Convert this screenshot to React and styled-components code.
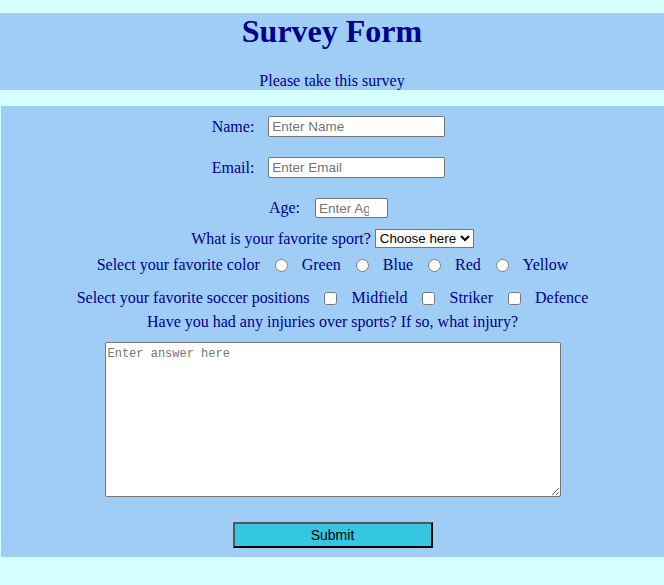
import styled, { createGlobalStyle } from "styled-components";

const GlobalStyle = createGlobalStyle`
  html, body {
    margin: 0;
    padding: 0;
    background: #d5ffff;
    font-family: "Liberation Serif", "Times New Roman", serif;
  }
`;

const Page = styled.div`
  min-height: 585px;
  padding-top: 13px;
  box-sizing: border-box;
`;

const Header = styled.header`
  background: #9fcdf6;
  text-align: center;
  color: #00008b;
`;

const Title = styled.h1`
  margin: 0;
  font-size: 32px;
  line-height: 37px;
  font-weight: bold;
`;

const Subtitle = styled.p`
  margin: 22px 0 0;
  font-size: 16px;
  line-height: 18px;
`;

const Form = styled.form`
  margin: 16px 0 0 1px;
  background: #9fcdf6;
  color: #00008b;
  font-size: 16px;
  line-height: 18px;
  display: flex;
  flex-direction: column;
  align-items: center;
  padding-bottom: 9px;
`;

const Row = styled.div`
  display: flex;
  align-items: center;
  justify-content: center;
  margin-top: ${(p) => p.$mt}px;
  height: ${(p) => p.$h}px;
  padding-right: ${(p) => p.$shift || 0}px;
`;

const Label = styled.label`
  margin-right: ${(p) => p.$gap}px;
  white-space: nowrap;
`;

const TextInput = styled.input`
  box-sizing: border-box;
  width: ${(p) => p.$w}px;
  height: ${(p) => p.$h}px;
  margin: 0;
  padding: 1px 3px;
  border: 1px solid #767676;
  border-radius: 2px;
  background: #fff;
  font-family: "Liberation Sans", Arial, sans-serif;
  font-size: 13.5px;
  &::placeholder {
    color: #757575;
  }
`;

const Select = styled.select`
  box-sizing: border-box;
  width: 99px;
  height: 19px;
  margin: 0 0 0 4px;
  padding: 0;
  border: 1px solid #767676;
  border-radius: 0;
  background: #fff;
  color: #000;
  font-family: "Liberation Sans", Arial, sans-serif;
  font-size: 13.33px;
`;

const Choice = styled.input`
  width: 13px;
  height: 13px;
  margin: 0 14px 0 15px;
  flex: none;
`;

const Textarea = styled.textarea`
  box-sizing: border-box;
  width: 456px;
  height: 155px;
  margin: 0;
  padding: 4px 2px;
  border: 1px solid #767676;
  border-radius: 2px;
  background: #fff;
  font-family: "Liberation Mono", "Courier New", monospace;
  font-size: 12px;
  &::placeholder {
    color: #757575;
  }
`;

const SubmitButton = styled.button`
  box-sizing: border-box;
  width: 200px;
  height: 26px;
  margin: 0;
  padding: 0;
  background: #35c6e1;
  border: 2px solid;
  border-color: #555 #000 #000 #555;
  color: #000;
  font-family: "Liberation Sans", Arial, sans-serif;
  font-size: 14px;
`;

const colors = ["Green", "Blue", "Red", "Yellow"];
const positions = ["Midfield", "Striker", "Defence"];

export default function App() {
  return (
    <Page>
      <GlobalStyle />
      <Header>
        <Title>Survey Form</Title>
        <Subtitle>Please take this survey</Subtitle>
      </Header>
      <Form onSubmit={(e) => e.preventDefault()}>
        <Row $mt={10} $h={21} $shift={8}>
          <Label $gap={14}>Name:</Label>
          <TextInput type="text" placeholder="Enter Name" $w={177} $h={21} />
        </Row>
        <Row $mt={20} $h={21} $shift={8}>
          <Label $gap={14}>Email:</Label>
          <TextInput type="email" placeholder="Enter Email" $w={177} $h={21} />
        </Row>
        <Row $mt={20} $h={20} $shift={8}>
          <Label $gap={15}>Age:</Label>
          <TextInput type="number" placeholder="Enter Age" $w={73} $h={20} />
        </Row>
        <Row $mt={11} $h={19}>
          <Label $gap={0}>What is your favorite sport?</Label>
          <Select defaultValue="">
            <option value="">Choose here</option>
            <option>Soccer</option>
            <option>Basketball</option>
            <option>Tennis</option>
          </Select>
        </Row>
        <Row $mt={8} $h={18}>
          <Label $gap={0}>Select your favorite color</Label>
          {colors.map((c) => (
            <Label key={c} $gap={0}>
              <Row $mt={0} $h={18}>
                <Choice type="radio" name="color" />
                {c}
              </Row>
            </Label>
          ))}
        </Row>
        <Row $mt={15} $h={18}>
          <Label $gap={0}>Select your favorite soccer positions</Label>
          {positions.map((p) => (
            <Label key={p} $gap={0}>
              <Row $mt={0} $h={18}>
                <Choice type="checkbox" />
                {p}
              </Row>
            </Label>
          ))}
        </Row>
        <Row $mt={6} $h={18}>
          <Label $gap={0}>Have you had any injuries over sports? If so, what injury?</Label>
        </Row>
        <Row $mt={11} $h={155}>
          <Textarea placeholder="Enter answer here" />
        </Row>
        <Row $mt={25} $h={26}>
          <SubmitButton type="submit">Submit</SubmitButton>
        </Row>
      </Form>
    </Page>
  );
}
